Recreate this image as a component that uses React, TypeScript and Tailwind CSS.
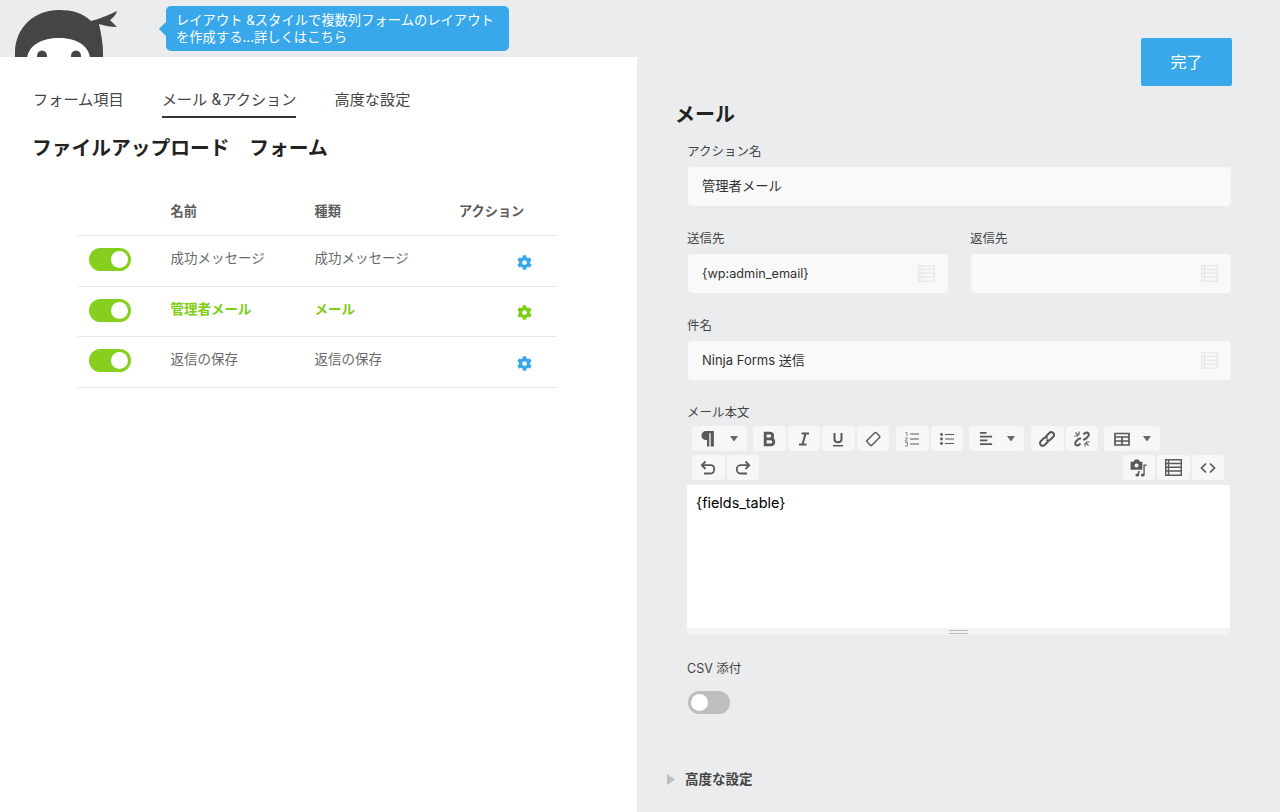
import type { ReactNode } from "react";
import { FaCog } from "react-icons/fa";

const FONT = "font-['Inter','Noto_Sans_CJK_JP',sans-serif]";

const ACTIONS = [
  { name: "成功メッセージ", type: "成功メッセージ", active: false, height: "h-[51px]" },
  { name: "管理者メール", type: "メール", active: true, height: "h-[50px]" },
  { name: "返信の保存", type: "返信の保存", active: false, height: "h-[51px]" },
];

function NinjaLogo() {
  return (
    <svg viewBox="0 0 105 57" className="h-[57px] w-[105px] shrink-0">
      <path d="M0 60V53C0 27 20 10 44 10C57 10 68 13 76 21C84 19 94 15 102 11C101 15 98 18 95 20L102 27C96 27 90 26 84 24C86 33 88 43 88 53V60Z" fill="#444545" />
      <path d="M12 60C12 46 26 38 44 38C62 38 75 46 75 60Z" fill="#ffffff" />
      <ellipse cx="27" cy="56" rx="5" ry="5.5" fill="#444545" />
      <ellipse cx="61" cy="56" rx="5" ry="5.5" fill="#444545" />
    </svg>
  );
}

function Toggle({ on }: { on: boolean }) {
  return (
    <div
      className={`flex h-[23px] w-[42px] items-center rounded-full px-[3px] ${
        on ? "justify-end bg-[#86cf1e]" : "justify-start bg-[#bdbec0]"
      }`}
    >
      <div className="h-[17px] w-[17px] rounded-full bg-white" />
    </div>
  );
}

function Tab({ label, active }: { label: string; active?: boolean }) {
  return (
    <div className={`h-[28px] text-[15.2px] leading-[20px] text-[#444] ${active ? "border-b-2 border-[#333]" : ""}`}>
      {label}
    </div>
  );
}

function MergeIcon({ className }: { className: string }) {
  return (
    <svg viewBox="0 0 18 18" className={className} fill="currentColor">
      <path d="M0 0H18V18H0ZM1.5 1.5V4H3V1.5ZM4.5 1.5V4H16.5V1.5ZM1.5 5.5V8H3V5.5ZM4.5 5.5V8H16.5V5.5ZM1.5 9.5V12H3V9.5ZM4.5 9.5V12H16.5V9.5ZM1.5 13.5V16.5H3V13.5ZM4.5 13.5V16.5H16.5V13.5Z" fillRule="evenodd" />
    </svg>
  );
}

function Field({
  label,
  value,
  merge,
  width,
  valueSize = "text-[13.3px]",
}: {
  label: string;
  value?: string;
  merge?: boolean;
  width: string;
  valueSize?: string;
}) {
  return (
    <div className={width}>
      <div className="-ml-px mt-px h-[18px] text-[12.5px] leading-[18px] text-[#444]">{label}</div>
      <div className={`mt-[6px] flex h-[39px] items-center justify-between rounded-[4px] bg-[#f9f9f9] pl-[14px] pr-[13px] text-[#333] ${valueSize}`}>
        <span>{value}</span>
        {merge && <MergeIcon className="h-[17px] w-[17px] text-[#e9e9e9]" />}
      </div>
    </div>
  );
}

function Btn({ children, wide }: { children: ReactNode; wide?: string }) {
  return (
    <div className={`flex h-[25px] items-center justify-center rounded-[4px] bg-[#f7f7f7] text-[#595959] ${wide ?? "w-[32.5px]"}`}>
      {children}
    </div>
  );
}

function Caret() {
  return (
    <svg viewBox="0 0 8 6" className="h-[6px] w-[8px]" fill="#666">
      <path d="M0 0H8L4 5.5Z" />
    </svg>
  );
}

function Ico({ children, className }: { children: ReactNode; className?: string }) {
  return (
    <svg viewBox="0 0 16 16" className={className ?? "h-4 w-4"} fill="none" stroke="currentColor" strokeWidth="1.4">
      {children}
    </svg>
  );
}

function Toolbar() {
  return (
    <div className="mt-[4px] flex flex-col gap-[4px] pl-[5px]">
      <div className="flex">
        <Btn wide="w-[55px] gap-[14px] pr-[2px]">
          <Ico className="h-[17px] w-[17px]">
            <path d="M14 1H6.5A4 4 0 0 0 6.5 9.5H7.5V15.5H9.7V3H11V15.5H14Z" fill="currentColor" stroke="none" />
          </Ico>
          <Caret />
        </Btn>
        <div className="ml-[6px] flex gap-[2px]">
          <Btn>
            <Ico>
              <path d="M4.2 2.2H8.8C12.6 2.2 12.6 7.8 8.8 7.8H4.2ZM4.2 7.8H9.8C13.8 7.8 13.8 13.8 9.8 13.8H4.2Z" strokeWidth="2.8" />
            </Ico>
          </Btn>
          <Btn>
            <Ico>
              <path d="M5.5 2.5H13M3 13.5H10.5M9.6 2.5L6.4 13.5" strokeWidth="2" />
            </Ico>
          </Btn>
          <Btn>
            <Ico>
              <path d="M4.5 2V8.5C4.5 12 11.5 12 11.5 8.5V2" strokeWidth="2" />
              <path d="M3 14.7H13" strokeWidth="1.5" />
            </Ico>
          </Btn>
          <Btn>
            <Ico>
              <path d="M1.5 10L9.5 2C10 1.5 11 1.5 11.5 2L14.5 5C15 5.5 15 6 14.5 6.5L6.5 14.5H5.5Z" />
            </Ico>
          </Btn>
        </div>
        <div className="ml-[7px] flex gap-[2px]">
          <Btn>
            <Ico>
              <path d="M6 3H15M6 8H15M6 13H15" strokeWidth="1" />
              <path d="M1.5 1.5H3V5M1 7H3.5L1 10H3.5M1 11.5H3.5V15H1" strokeWidth="0.7" />
            </Ico>
          </Btn>
          <Btn>
            <Ico>
              <path d="M6 3.5H15M6 8H15M6 12.5H15" strokeWidth="1.1" />
              <circle cx="2.5" cy="3.5" r="1.4" fill="currentColor" stroke="none" />
              <circle cx="2.5" cy="8" r="1.4" fill="currentColor" stroke="none" />
              <circle cx="2.5" cy="12.5" r="1.4" fill="currentColor" stroke="none" />
            </Ico>
          </Btn>
        </div>
        <div className="ml-[6px]">
          <Btn wide="w-[55px] gap-[13px]">
            <Ico className="h-[15px] w-[15px]">
              <path d="M1 2H8M1 6H14M1 10H9M1 14H14" strokeWidth="1.7" />
            </Ico>
            <Caret />
          </Btn>
        </div>
        <div className="ml-[7px] flex gap-[2px]">
          <Btn>
            <Ico>
              <path d="M6.5 6L10 2.2C11.5 .8 13.2 1 14.2 2S15.4 4.6 14 6L11.5 8.5C10 10 8.5 9.8 7.5 8.8" strokeWidth="2" />
              <path d="M9.5 10L6 13.8C4.5 15.2 2.8 15 1.8 14S.6 11.4 2 10L4.5 7.5C6 6 7.5 6.2 8.5 7.2" strokeWidth="2" />
            </Ico>
          </Btn>
          <Btn>
            <Ico>
              <path d="M9.5 3.5L10.5 2.5C12 1.2 13.6 1.5 14.3 2.2S15 4.5 13.5 6L12 7.5C11 8.5 10 8.7 9 8.4" strokeWidth="2" />
              <path d="M6.5 12.5L5.5 13.5C4 14.8 2.4 14.5 1.7 13.8S1 11.5 2.5 10L4 8.5C5 7.5 6 7.3 7 7.6" strokeWidth="2" />
              <path d="M5 .5V4M.5 5H4M11 15.5V12M15.5 11H12M1.5 1.5L4.5 4.5M14.5 14.5L11.5 11.5" strokeWidth="1.1" />
            </Ico>
          </Btn>
        </div>
        <div className="ml-[6px]">
          <Btn wide="w-[56px] gap-[13px]">
            <Ico>
              <path d="M1 2.5H15V14H1ZM1 6H15M1 10H15M8 6V14" strokeWidth="1.7" />
            </Ico>
            <Caret />
          </Btn>
        </div>
      </div>
      <div className="flex justify-between pr-[6px]">
        <div className="flex gap-[2px]">
          <Btn>
            <Ico>
              <path d="M5.5 1.5L1.8 5.2L5.5 9" strokeWidth="1.8" />
              <path d="M2 5.2H10.5C15.5 5.2 15.5 13.5 10.5 13.5H4" strokeWidth="1.8" />
            </Ico>
          </Btn>
          <Btn>
            <Ico>
              <path d="M10.5 1.5L14.2 5.2L10.5 9" strokeWidth="1.8" />
              <path d="M14 5.2H5.5C.5 5.2 .5 13.5 5.5 13.5H12" strokeWidth="1.8" />
            </Ico>
          </Btn>
        </div>
        <div className="flex gap-[2px]">
          <Btn>
            <Ico className="h-[18px] w-[18px]">
              <path d="M.5 2.5H3L4.5 .5H7.5L9 2.5H11V9.5H.5Z" fill="currentColor" stroke="none" />
              <circle cx="5.8" cy="5.8" r="1.8" fill="#f7f7f7" stroke="none" />
              <path d="M14.8 5.5H12.5V14M7.5 14.5V11.5H9" strokeWidth="1.2" />
              <ellipse cx="11.3" cy="14.2" rx="1.7" ry="1.4" fill="currentColor" stroke="none" />
              <ellipse cx="6.5" cy="14.2" rx="1.7" ry="1.4" fill="currentColor" stroke="none" />
            </Ico>
          </Btn>
          <Btn>
            <MergeIcon className="h-[17px] w-[17px]" />
          </Btn>
          <Btn>
            <Ico>
              <path d="M6 3.5L1.5 8L6 12.5M10 3.5L14.5 8L10 12.5" strokeWidth="1.7" />
            </Ico>
          </Btn>
        </div>
      </div>
    </div>
  );
}

export default function App() {
  return (
    <div className={`${FONT} flex h-[812px] w-[1280px] overflow-hidden bg-[#ebecee]`}>
      <div className="flex w-[637px] shrink-0 flex-col">
        <div className="flex h-[57px] shrink-0 items-start overflow-hidden pl-[15px]">
          <NinjaLogo />
          <div className="relative ml-[46px] mt-[6px] h-[45px] w-[343px] rounded-[5px] bg-[#38a8ea] pl-[10px] pt-[6px] text-[13.3px] leading-[17px] text-white">
            <div className="absolute -left-[5px] top-[18px] h-[10px] w-[10px] rotate-45 bg-[#38a8ea]" />
            <div className="whitespace-nowrap">レイアウト &amp;スタイルで複数列フォームのレイアウト</div>
            <div className="whitespace-nowrap">を作成する...詳しくはこちら</div>
          </div>
        </div>
        <div className="flex-1 bg-white pl-[33px] pt-[33px]">
          <div className="flex gap-[38px]">
            <Tab label="フォーム項目" />
            <Tab label="メール &アクション" active />
            <Tab label="高度な設定" />
          </div>
          <h1 className="-ml-px mt-[15px] h-[28px] text-[19.75px] font-bold leading-[30px] text-[#222]">
            ファイルアップロード　フォーム
          </h1>
          <div className="ml-[45px] mt-[37px] w-[479px]">
            <div className="grid h-[38px] grid-cols-[92.5px_144px_144.5px_1fr] border-b border-[#e8e8e8] text-[13.2px] font-bold leading-[27px] text-[#5c5c5c]">
              <div />
              <div>名前</div>
              <div>種類</div>
              <div>アクション</div>
            </div>
            {ACTIONS.map((a) => (
              <div
                key={a.name}
                className={`grid ${a.height} grid-cols-[92.5px_144px_144.5px_1fr] items-center border-b border-[#e8e8e8] text-[13.5px] ${
                  a.active ? "font-bold text-[#7dce14]" : "text-[#6a6a6a]"
                }`}
              >
                <div className="pb-[3px] pl-[11px]">
                  <Toggle on />
                </div>
                <div className="pb-[5px]">{a.name}</div>
                <div className="pb-[5px]">{a.type}</div>
                <div className="flex justify-end pr-[25px] pt-[2px]">
                  <FaCog className={`h-[15px] w-[15px] ${a.active ? "text-[#7dce14]" : "text-[#38a8ea]"}`} />
                </div>
              </div>
            ))}
          </div>
        </div>
      </div>

      <div className="flex flex-1 flex-col pl-[39px] pr-[48px] pt-[38px]">
        <div className="flex h-[48px] w-[91px] shrink-0 items-center justify-center self-end rounded-[2px] bg-[#38a8ea] text-[16px] text-white">
          完了
        </div>
        <h2 className="-ml-px mt-[15px] h-[27px] text-[20px] font-bold leading-[28px] text-[#222]">メール</h2>
        <div className="mt-[14px] pl-[12px]">
          <Field label="アクション名" value="管理者メール" width="w-[543px]" />
          <div className="mt-[23px] flex gap-[23px]">
            <Field label="送信先" value="{wp:admin_email}" merge width="w-[260px]" valueSize="text-[12.7px]" />
            <Field label="返信先" merge width="w-[260px]" />
          </div>
          <div className="mt-[24px]">
            <Field label="件名" value="Ninja Forms 送信" merge width="w-[543px]" valueSize="text-[13px]" />
          </div>
          <div className="-ml-px mt-[24px] w-[543px]">
            <div className="h-[18px] text-[12.5px] leading-[18px] text-[#444]">メール本文</div>
            <Toolbar />
            <div className="mt-[5px] h-[143px] bg-white pl-[9px] pt-[8px] text-[14.4px] leading-[20px] text-black">
              {"{fields_table}"}
            </div>
            <div className="flex h-[7px] items-center justify-end rounded-b-[3px] bg-[#f3f3f3] pr-[262px]">
              <div className="h-[4px] w-[19px] border-y border-[#bbb]" />
            </div>
            <div className="mt-[25px] h-[18px] text-[12.5px] leading-[18px] text-[#444]">CSV 添付</div>
            <div className="ml-px mt-[13px]">
              <Toggle on={false} />
            </div>
          </div>
        </div>
        <div className="-ml-[9px] mt-[56px] flex h-[18px] items-center gap-[10px] text-[13.5px] font-bold text-[#444]">
          <svg viewBox="0 0 8 11" className="h-[11px] w-[8px]" fill="#bdbec0">
            <path d="M0 0L8 5.5L0 11Z" />
          </svg>
          高度な設定
        </div>
      </div>
    </div>
  );
}
